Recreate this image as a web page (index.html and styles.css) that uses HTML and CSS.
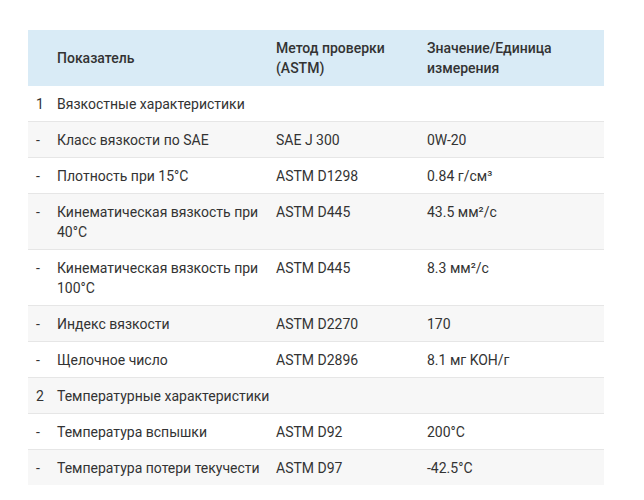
FILE: index.html
```html
<!DOCTYPE html>
<html lang="ru">
<head>
<meta charset="utf-8">
<link rel="stylesheet" href="styles.css">
</head>
<body>
<div class="page">
<table class="spec">
  <colgroup>
    <col class="c-num"><col class="c-name"><col class="c-method"><col class="c-value">
  </colgroup>
  <thead>
    <tr><th></th><th>Показатель</th><th>Метод проверки (ASTM)</th><th>Значение/Единица измерения</th></tr>
  </thead>
  <tbody>
    <tr><td>1</td><td colspan="3">Вязкостные характеристики</td></tr>
    <tr><td>-</td><td>Класс вязкости по SAE</td><td>SAE J 300</td><td>0W-20</td></tr>
    <tr><td>-</td><td>Плотность при 15°C</td><td>ASTM D1298</td><td>0.84 г/см³</td></tr>
    <tr><td>-</td><td>Кинематическая вязкость при 40°C</td><td>ASTM D445</td><td>43.5 мм²/с</td></tr>
    <tr><td>-</td><td>Кинематическая вязкость при 100°C</td><td>ASTM D445</td><td>8.3 мм²/с</td></tr>
    <tr><td>-</td><td>Индекс вязкости</td><td>ASTM D2270</td><td>170</td></tr>
    <tr><td>-</td><td>Щелочное число</td><td>ASTM D2896</td><td>8.1 мг KOH/г</td></tr>
    <tr><td>2</td><td colspan="3">Температурные характеристики</td></tr>
    <tr><td>-</td><td>Температура вспышки</td><td>ASTM D92</td><td>200°C</td></tr>
    <tr><td>-</td><td>Температура потери текучести</td><td>ASTM D97</td><td>-42.5°C</td></tr>
  </tbody>
</table>
</div>
</body>
</html>
```
FILE: styles.css
```css
html, body {
  margin: 0;
  padding: 0;
  background: #fff;
}
.page {
  padding: 30px 0 0 28px;
}
.spec {
  width: 576px;
  border-collapse: collapse;
  table-layout: fixed;
  font-family: Roboto, "Liberation Sans", sans-serif;
  font-size: 14px;
  line-height: 20px;
  color: #333;
}
.c-num { width: 21px; }
.c-name { width: 219px; }
.c-method { width: 151px; }
.c-value { width: 185px; }
.spec th, .spec td {
  padding: 8px;
  text-align: left;
  vertical-align: top;
}
.spec th {
  background: #d9ebf6;
  font-weight: 500;
  vertical-align: middle;
}
.spec td:first-child {
  padding-right: 0;
}
.spec tbody td {
  padding-top: 8px;
  padding-bottom: 7px;
}
.spec tbody tr {
  border-top: 1px solid #e6e6e6;
}
.spec tbody tr:first-child {
  border-top: none;
}
.spec tbody tr:nth-child(even) {
  background: #f7f7f7;
}
```
